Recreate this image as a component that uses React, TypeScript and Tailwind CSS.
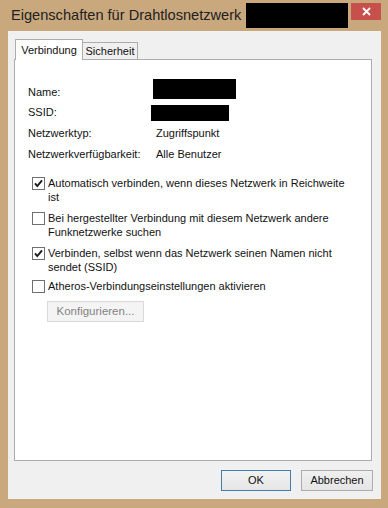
import React from 'react';

const font = "font-['Liberation_Sans','Arial',sans-serif]";

const Check: React.FC<{ checked?: boolean }> = ({ checked }) => (
  <div className="w-[13px] h-[13px] shrink-0 border border-[#707070] bg-white flex items-center justify-center">
    {checked && (
      <svg width="11" height="11" viewBox="0 0 11 11">
        <path d="M2 5.3 L4.3 8 L9 2.3" fill="none" stroke="#1a1a1a" strokeWidth="1.9" />
      </svg>
    )}
  </div>
);

const Option: React.FC<{ checked?: boolean; lines: string[]; className?: string }> = ({ checked, lines, className }) => (
  <div className={`flex items-start ml-[4px] ${className ?? ''}`}>
    <div className="mt-[1px]">
      <Check checked={checked} />
    </div>
    <div className="ml-[3px] leading-[14px] whitespace-nowrap">
      {lines.map((l, i) => (
        <div key={i}>{l}</div>
      ))}
    </div>
  </div>
);

export default function App() {
  return (
    <div className={`w-[388px] h-[508px] bg-[#c9a87e] flex flex-col ${font} text-[11px] text-[#111]`}>
      {/* title bar */}
      <div className="h-[31px] flex items-start shrink-0">
        <div className="pl-[11px] pt-[6px] text-[14.6px] leading-[18px] text-[#222] whitespace-nowrap">
          Eigenschaften für Drahtlosnetzwerk
        </div>
        <div className="ml-[5px] mt-[3px] w-[102px] h-[25px] bg-black" />
        <div className="ml-auto mr-[7px] mt-[3px] w-[30px] h-[17px] bg-[#c7504c] flex items-center justify-center">
          <svg width="9" height="9" viewBox="0 0 9 9">
            <path d="M1 1 L8 8 M8 1 L1 8" stroke="#fff" strokeWidth="1.8" />
          </svg>
        </div>
      </div>

      {/* client area */}
      <div className="flex-1 ml-[8px] mr-[7px] mb-[9px] bg-[#f0f0f0] flex flex-col pl-[6px] pr-[9px] pt-[8px] pb-[8px]">
        {/* tabs */}
        <div className="flex items-end h-[20px]">
          <div className="relative z-10 ml-[1px] w-[68px] h-[21px] -mb-px bg-white border border-b-0 border-[#acacac] flex items-start justify-center pt-[3px] leading-[14px]">
            Verbindung
          </div>
          <div className="-ml-px w-[56px] h-[17px] bg-[#f0f0f0] border border-b-0 border-[#acacac] flex items-start justify-center pt-[1px] leading-[14px]">
            Sicherheit
          </div>
        </div>

        {/* panel */}
        <div className="flex-1 bg-white border border-[#adadad] pl-[13px] pt-[19px] flex flex-col">
          <div className="flex items-start h-[21px]">
            <div className="w-[128px] mt-[6px] leading-[14px]">Name:</div>
            <div className="-ml-[3px] w-[83px] h-[20px] bg-black" />
          </div>
          <div className="flex items-start h-[17px] mt-[4px]">
            <div className="w-[128px] mt-[1px] leading-[14px]">SSID:</div>
            <div className="-ml-[5px] mt-[1px] w-[78px] h-[16px] bg-black" />
          </div>
          <div className="flex mt-[5px] leading-[14px]">
            <div className="w-[128px]">Netzwerktyp:</div>
            <div>Zugriffspunkt</div>
          </div>
          <div className="flex mt-[7px] leading-[14px]">
            <div className="w-[128px]">Netzwerkverfügbarkeit:</div>
            <div>Alle Benutzer</div>
          </div>

          <Option className="mt-[15px]" checked lines={['Automatisch verbinden, wenn dieses Netzwerk in Reichweite', 'ist']} />
          <Option className="mt-[7px]" lines={['Bei hergestellter Verbindung mit diesem Netzwerk andere', 'Funknetzwerke suchen']} />
          <Option className="mt-[7px]" checked lines={['Verbinden, selbst wenn das Netzwerk seinen Namen nicht', 'sendet (SSID)']} />
          <Option className="mt-[5px]" lines={['Atheros-Verbindungseinstellungen aktivieren']} />

          <div className="mt-[8px] ml-[19px] w-[97px] h-[21px] bg-[#f4f4f4] border border-[#d9d9d9] text-[#838383] text-[11.5px] flex items-center justify-center">
            Konfigurieren...
          </div>
        </div>

        {/* buttons */}
        <div className="flex justify-end gap-[10px] mt-[9px] -mr-px">
          <div className="w-[70px] h-[21px] border border-[#3c7fb1] bg-gradient-to-b from-[#f2f2f2] to-[#e6e6e6] flex items-center justify-center">
            OK
          </div>
          <div className="w-[72px] h-[21px] border border-[#acacac] bg-gradient-to-b from-[#f0f0f0] to-[#e5e5e5] flex items-center justify-center">
            Abbrechen
          </div>
        </div>
      </div>
    </div>
  );
}
